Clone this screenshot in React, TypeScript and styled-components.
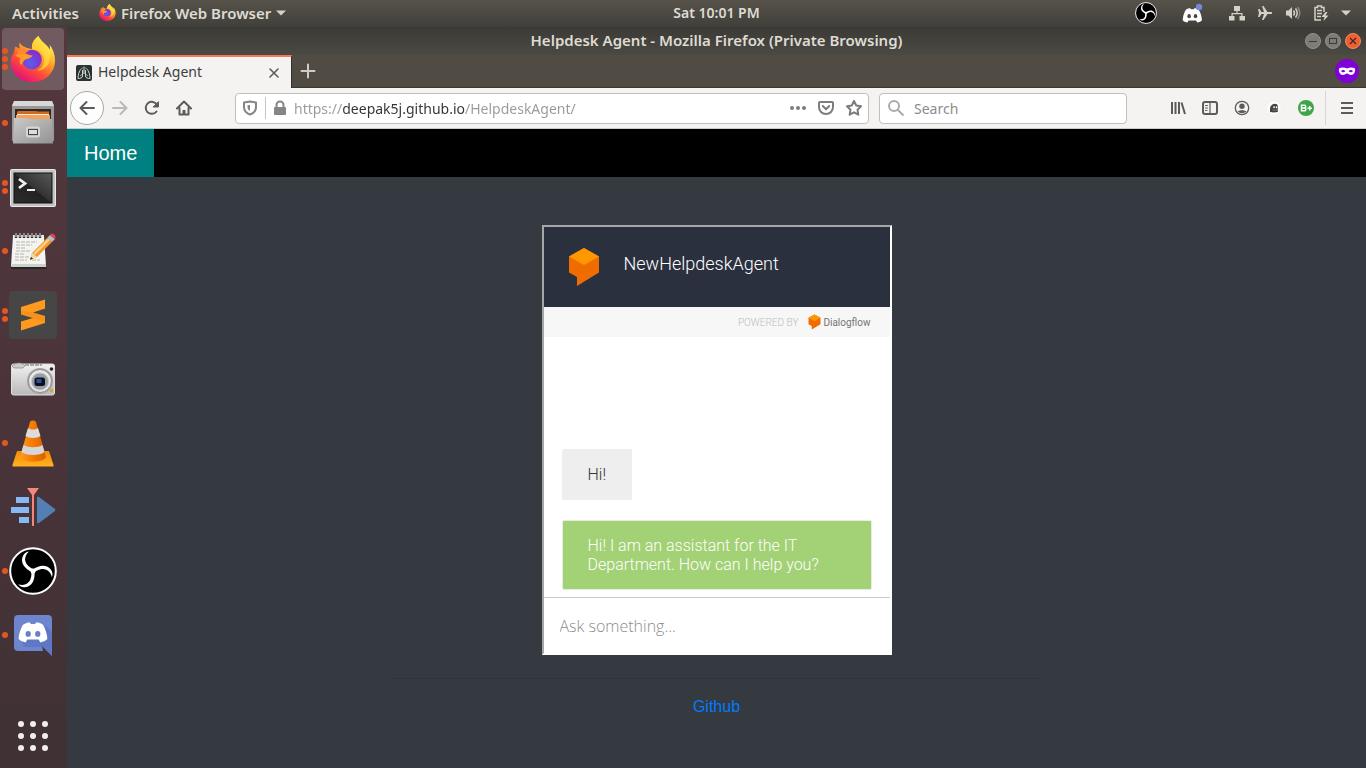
import React, { useId } from "react";
import styled, { createGlobalStyle } from "styled-components";

const uiFont = '"Noto Sans", "Open Sans", sans-serif';
const chatFont = 'Roboto, sans-serif';
const pageFont = '"Liberation Sans", Arial, sans-serif';

const GlobalStyle = createGlobalStyle`
  * { box-sizing: border-box; }
  body { margin: 0; background: #343a40; font-family: ${uiFont}; }
  button { font: inherit; border: 0; padding: 0; background: none; color: inherit; cursor: pointer; }
  svg { display: block; flex: none; }
`;

/* ---------- desktop shell ---------- */

const Desktop = styled.div`
  min-height: 100vh;
  display: flex;
  flex-direction: column;
`;

const TopBar = styled.header`
  height: 27px;
  display: grid;
  grid-template-columns: 67px 1fr auto 1fr;
  align-items: center;
  padding-bottom: 2px;
  background: linear-gradient(#57534b, #403f3a);
  color: #dfdbd2;
  font-size: 15px;
  font-weight: 600;
  line-height: 20px;
`;

const TopLeft = styled.div`
  grid-column: 1 / 3;
  display: flex;
  align-items: center;
  gap: 20px;
  padding-left: 12px;
`;

const AppMenu = styled.button`
  display: flex;
  align-items: center;
  gap: 5px;
`;

const Clock = styled.span`
  font-size: 14px;
`;

const Tray = styled.div`
  display: flex;
  align-items: center;
  justify-content: flex-end;
  gap: 24px;
  padding-right: 15px;
`;

const TrayGroup = styled.div`
  display: flex;
  align-items: center;
  gap: 12px;
`;

const Workspace = styled.div`
  flex: 1;
  display: flex;
`;

const Dock = styled.nav`
  width: 67px;
  flex: none;
  display: flex;
  flex-direction: column;
  gap: 2px;
  padding: 1px 3px 1px 2px;
  background: linear-gradient(#53383d, #4a343a 50%, #3f3134);
`;

const DockItem = styled.button<{ $active?: boolean }>`
  height: 62px;
  display: grid;
  grid-template-columns: 6px 1fr 6px;
  align-items: center;
  justify-items: center;
  border-radius: 4px;
  background: ${(p) => (p.$active ? "#725b60" : "transparent")};
`;

const Dots = styled.span`
  display: flex;
  flex-direction: column;
  gap: 2px;
`;

const Dot = styled.i`
  width: 6px;
  height: 6px;
  border-radius: 50%;
  background: #e95420;
`;

const DockSpacer = styled.div`
  flex: 1;
`;

/* ---------- browser window ---------- */

const Window = styled.main`
  flex: 1;
  min-width: 0;
  display: flex;
  flex-direction: column;
`;

const TitleBar = styled.div`
  height: 28px;
  display: grid;
  grid-template-columns: 1fr auto 1fr;
  align-items: center;
  padding: 0 5px;
  background: linear-gradient(#3b3a36, #4b4943);
  color: #dfdbd2;
  font-size: 15px;
  font-weight: 600;
  line-height: 20px;
`;

const WindowTitle = styled.span`
  grid-column: 2;
  padding-bottom: 2px;
`;

const WindowButtons = styled.div`
  display: flex;
  justify-content: flex-end;
  gap: 4px;
`;

const TabStrip = styled.div`
  height: 33px;
  display: flex;
  align-items: stretch;
  background: #504c44;
  border-bottom: 1px solid #3a3833;
`;

const Tab = styled.div`
  width: 225px;
  margin-bottom: -1px;
  display: flex;
  align-items: center;
  padding: 0 9px;
  border-top: 2px solid #f57c4f;
  border-right: 1px solid #33312d;
  background: #f4f3f1;
  color: #3d3d3d;
  font-size: 14px;
`;

const TabTitle = styled.span`
  flex: 1;
  padding: 0 0 2px 6px;
`;

const NewTab = styled.button`
  width: 32px;
  display: flex;
  align-items: center;
  justify-content: center;
`;

const PrivateBadge = styled.div`
  margin-left: auto;
  padding-right: 7px;
  display: flex;
  align-items: center;
`;

const ToolBar = styled.div`
  height: 41px;
  display: flex;
  align-items: center;
  padding: 0 3px;
  background: #f4f3f1;
  border-bottom: 1px solid #cfcbc6;
`;

const ToolButton = styled.button<{ $round?: boolean }>`
  width: ${(p) => (p.$round ? 34 : 32)}px;
  height: 34px;
  display: flex;
  align-items: center;
  justify-content: center;
  border: ${(p) => (p.$round ? "1px solid #aaa8a5" : "0")};
  border-radius: ${(p) => (p.$round ? 17 : 3)}px;
  background: ${(p) => (p.$round ? "#fdfdfd" : "transparent")};
`;

const Field = styled.div<{ $grow?: boolean }>`
  height: 31px;
  min-width: 0;
  ${(p) => (p.$grow ? "flex: 1; margin-left: 35px;" : "width: 248px; margin: 0 35px 0 10px;")}
  display: flex;
  align-items: center;
  gap: ${(p) => (p.$grow ? 7 : 8)}px;
  padding: 0 6px;
  border: 1px solid #c2bfbb;
  border-radius: 4px;
  background: #fff;
`;

const FieldDivider = styled.span`
  width: 1px;
  height: 22px;
  background: #c4c4c4;
`;

const TextInput = styled.input`
  flex: 1;
  min-width: 0;
  padding: 0;
  border: 0;
  outline: 0;
  background: transparent;
  font: 14px ${uiFont};
  color: #333;
  &::placeholder { color: #8c8c8c; opacity: 1; }
`;

/* The host name is darker than the scheme and the path. */
const UrlInput = styled(TextInput)`
  background: linear-gradient(90deg, #999 49px, #333 49px, #333 171px, #999 171px);
  -webkit-background-clip: text;
  background-clip: text;
  -webkit-text-fill-color: transparent;
`;

const FieldActions = styled.div`
  display: flex;
  gap: 12px;
`;

const ToolDivider = styled.span`
  width: 1px;
  height: 34px;
  margin: 0 5px 0 3px;
  background: #d9d6d2;
`;

/* ---------- web page ---------- */

const Page = styled.div`
  flex: 1;
  background: #343a40;
  font-family: ${pageFont};
`;

const SiteNav = styled.nav`
  display: flex;
  background: #000;
`;

const HomeLink = styled.a`
  padding: 12px 17px;
  background: #008080;
  color: #fff;
  font-size: 20px;
  line-height: 24px;
  text-decoration: none;
`;

const Content = styled.section`
  width: 50%;
  margin: 0 auto;
  padding-top: 48px;
  display: flex;
  flex-direction: column;
  align-items: center;
`;

const ChatFrame = styled.div`
  width: 350px;
  border: 2px solid;
  border-color: #a6a6a6 #fff #fff #a6a6a6;
  background: #fff;
  font-family: ${chatFont};
  font-weight: 300;
`;

const ChatHeader = styled.div`
  height: 80px;
  display: flex;
  align-items: center;
  gap: 24px;
  padding: 0 24px;
  background: #2b303f;
  color: #fff;
`;

const ChatTitle = styled.h1`
  margin: 0 0 6px;
  font-size: 18px;
  line-height: 24px;
  font-weight: 300;
`;

const PoweredBy = styled.div`
  height: 30px;
  display: flex;
  align-items: center;
  justify-content: flex-end;
  gap: 10px;
  padding-right: 19px;
  background: #f7f7f7;
  color: #b7bbc4;
  font-size: 10px;
`;

const Brand = styled.span`
  display: flex;
  align-items: center;
  gap: 2px;
  color: #757575;
  font-size: 10px;
  font-weight: 400;
`;

const Messages = styled.div`
  height: 260px;
  display: flex;
  flex-direction: column;
  justify-content: flex-end;
  align-items: flex-start;
  gap: 20px;
  padding: 0 18px 7px;
`;

const Bubble = styled.p<{ $reply?: boolean }>`
  margin: 0;
  padding: ${(p) => (p.$reply ? "15px 25px" : "16px 26px")};
  border: ${(p) => (p.$reply ? "1px solid #e6eedd" : "0")};
  border-radius: 2px;
  background: ${(p) => (p.$reply ? "#a3d175" : "#eee")};
  color: ${(p) => (p.$reply ? "#fff" : "#333")};
  font-size: 16px;
  line-height: 19px;
`;

const Ask = styled.input`
  display: block;
  width: 100%;
  height: 56px;
  padding: 0 16px;
  border: 0;
  border-top: 1px solid #ccc;
  outline: 0;
  background: #fff;
  font: 300 16px "Open Sans", sans-serif;
  &::placeholder { color: #8c8c8c; opacity: 1; }
`;

const Rule = styled.hr`
  width: 100%;
  margin: 23px 0 16px;
  border: 0;
  border-top: 1px solid #2f343a;
`;

const GithubLink = styled.a`
  color: #007bff;
  font-size: 16px;
  line-height: 24px;
  text-decoration: none;
`;

/* ---------- dock drawings ---------- */

function FirefoxIcon({ size }: { size: number }) {
  const id = useId();
  return (
    <svg width={size} height={size} viewBox="0 0 46 46">
      <defs>
        <linearGradient id={id + "b"} x1=".8" y1=".1" x2=".25" y2=".95">
          <stop offset="0" stopColor="#fff44f" />
          <stop offset=".35" stopColor="#ffa72a" />
          <stop offset=".65" stopColor="#ff5034" />
          <stop offset="1" stopColor="#e6107c" />
        </linearGradient>
        <linearGradient id={id + "f"} x1="1" y1="0" x2=".4" y2="1">
          <stop offset="0" stopColor="#fff44f" />
          <stop offset="1" stopColor="#ffb52a" />
        </linearGradient>
        <radialGradient id={id + "g"} cx=".4" cy=".7" r=".7">
          <stop offset="0" stopColor="#5b5cf0" />
          <stop offset="1" stopColor="#8a2bc4" />
        </radialGradient>
      </defs>
      <path d="M9.500 6.500C9 9 9.200 10.500 10 12.500L5 10.500C4.500 13 4.500 14.500 4 16.500C1.500 20 .5 23.500 .8 27C1.500 38 11 46 23 46C35.500 46 45 36.500 45 24.500C45 18.500 43 13 39.500 8.500C40 10.500 40.200 12 40 14C37 8 31 6.500 28.500 0C23.500 3.500 21.500 8.500 22 13C17 12.500 12 10.500 9.500 6.500Z" fill={`url(#${id}b)`} />
      <path d="M28.500 0C23 4 21 9 22.500 13.500C30 13 35 18 34 25C33.500 30 31 33 27 34.500C36 34.500 42 27 40 14C37 8 31 6.500 28.500 0Z" fill={`url(#${id}f)`} />
      <circle cx="22" cy="23.500" r="9.800" fill={`url(#${id}g)`} />
      <path d="M5 20C8 17 12 17 16 17.500C18 18.500 20 19.500 22.500 19.500C22 22 17 23 14.500 24C13.500 26 12 27 11.500 29C9 27 9.500 24.500 10.500 22.500C8.500 20.800 7 20.500 5 20Z" fill="#ff9a24" />
      <path d="M10 12.500C14 11.500 17 13 18 15.500C16 16 15 17 14 18.500C12 18 9 18 7 19C7.500 16 8.500 14 10 12.500Z" fill="#ff8a2c" />
    </svg>
  );
}

const FilesIcon = () => (
  <svg width="44" height="46" viewBox="0 0 44 46">
    <defs>
      <linearGradient id="cab" x1="0" y1="0" x2="1" y2="1">
        <stop offset="0" stopColor="#cacaca" />
        <stop offset="1" stopColor="#929292" />
      </linearGradient>
    </defs>
    <path d="M3 1H41L43 6V41H1V6Z" fill="#989898" />
    <path d="M3 1H41L43 6H1Z" fill="#d8d8d8" />
    <rect x="4" y="9" width="36" height="10" fill="#2c2a28" />
    <path d="M6 12L7 11H25L27 11.500H38V18H6Z" fill="#cf6a24" />
    <path d="M5 15H39V19H5Z" fill="#f0a35a" />
    <path d="M6 14.500H38" stroke="#ffe9cc" />
    <path d="M3 18H15L17 19H41L42 43.500H2Z" fill="url(#cab)" />
    <rect x="16" y="27.500" width="12" height="9" rx="1.500" fill="#a8a8a8" stroke="#d6d6d6" strokeWidth="2" />
    <rect x="17.500" y="29.500" width="9" height="5" fill="#ddd" stroke="#444" />
  </svg>
);

const TerminalIcon = () => (
  <svg width="46" height="40" viewBox="0 -2 46 40">
    <defs>
      <linearGradient id="scr" x1="1" y1="0" x2="0" y2="1">
        <stop offset="0" stopColor="#5a5a5a" />
        <stop offset=".5" stopColor="#323232" />
        <stop offset=".51" stopColor="#222" />
        <stop offset="1" stopColor="#2c2c2c" />
      </linearGradient>
    </defs>
    <rect x=".5" y=".5" width="45" height="37" rx="1" fill="#c4c4c4" stroke="#e8e8e8" />
    <rect x="4" y="4" width="38" height="30" fill="url(#scr)" stroke="#111" />
    <path d="M9 10L15 14.500L9 19" fill="none" stroke="#eee" strokeWidth="2.800" />
    <path d="M17 21H25" stroke="#eee" strokeWidth="2" />
  </svg>
);

const NotesIcon = () => (
  <svg width="46" height="38" viewBox="0 0 46 38">
    <path d="M3 3H35V34L37 37H1Z" fill="#22282a" />
    <path d="M3 3H34L36 34H1Z" fill="#f3f3ef" />
    <path d="M2 32H36V35H1Z" fill="#cfcfca" />
    <path d="M6 1V6M10 1V6M14 1V6M18 1V6M22 1V6M26 1V6M30 1V6" stroke="#333" strokeWidth="2.400" />
    <path d="M6 1V5M10 1V5M14 1V5M18 1V5M22 1V5M26 1V5M30 1V5" stroke="#ddd" />
    <path d="M6 10H27M6 13H22M6 16H16M6 19H20M5 22H14M5 25H19M5 28H17M22 28H30" stroke="#b4b4b0" strokeDasharray="4 1" />
    <path d="M20 28L22 21L37 6L42 10L27 25Z" fill="#f29a2e" />
    <path d="M23.500 21L38 6.500L40 8L25 23Z" fill="#ffd08a" />
    <path d="M20 28L22 21L27 25Z" fill="#f4d9a8" />
    <path d="M20 28L21 25L23 26.500Z" fill="#222" />
    <path d="M37 6L40 3L45 7L42 10Z" fill="#b8bcc0" />
    <path d="M40 3C42 0 47 3 45 7Z" fill="#e8424e" />
  </svg>
);

const SublimeIcon = () => (
  <svg width="48" height="48" viewBox="0 0 48 48">
    <rect width="48" height="48" rx="4" fill="#464646" />
    <path d="M12 16L36 8.500V17.500L24 21.500L36 25V32L12 39.500V30.500L24 27L12 23.500Z" fill="#ff9a1f" />
    <path d="M24 21.500L36 25V31L12 23.500V20Z" fill="#e8861a" opacity=".4" />
  </svg>
);

const CameraIcon = () => (
  <svg width="44" height="34" viewBox="0 0 44 34">
    <defs>
      <linearGradient id="cam" x1="0" y1="0" x2="0" y2="1">
        <stop offset="0" stopColor="#f2f2f2" />
        <stop offset="1" stopColor="#b9b9b9" />
      </linearGradient>
    </defs>
    <rect x=".5" y="2" width="43" height="31" rx="2" fill="url(#cam)" stroke="#dedede" />
    <path d="M1 4C5 0 11 0 14 4L12 6H3Z" fill="#ccc" stroke="#888" strokeWidth=".7" />
    <path d="M14 3H31" stroke="#666" strokeDasharray="4 1" />
    <circle cx="29" cy="19" r="13" fill="#a4a4a4" />
    <circle cx="29" cy="19" r="11.500" fill="#e8e8e8" stroke="#8c8c8c" />
    <circle cx="29" cy="19.500" r="8.500" fill="#9a9da2" stroke="#c6c6c6" />
    <rect x="23.500" y="15.500" width="10.500" height="8.500" rx="2.500" fill="#0b1020" />
    <rect x="25.500" y="17" width="5" height="4" fill="#2c4f96" />
    <circle cx="40.500" cy="7" r="1.800" fill="#222" />
    <rect x="39" y="27" width="3" height="3" fill="#e8a020" />
  </svg>
);

const ConeIcon = () => (
  <svg width="42" height="48" viewBox="0 0 42 48">
    <defs>
      <linearGradient id="base" x1="0" y1="0" x2="0" y2="1">
        <stop offset="0" stopColor="#f48a0c" />
        <stop offset="1" stopColor="#ffb41e" />
      </linearGradient>
      <linearGradient id="cone">
        <stop offset="0" stopColor="#ff9a28" />
        <stop offset=".5" stopColor="#f47a00" />
        <stop offset="1" stopColor="#d96000" />
      </linearGradient>
    </defs>
    <path d="M5 32H37L41.500 46V47.500H.5V46Z" fill="url(#base)" />
    <path d="M8 38L18 3C18.500 1 23.500 1 24 3L34 38C32 44 10 44 8 38Z" fill="url(#cone)" />
    <path d="M16 9C19 11 23 11 26 9L28.500 17C25 19.500 17 19.500 13.500 17Z" fill="#dcdcdc" />
    <path d="M11.500 26C16 29 26 29 30.500 26L32.500 33C28 37 14 37 9.500 33Z" fill="#d6d6d6" />
  </svg>
);

const EditorIcon = () => (
  <svg width="46" height="38" viewBox="0 0 46 38">
    <path d="M6 9H19V15H6ZM1 19H19V25H1ZM9 29H19V35H9Z" fill="#86b9f4" />
    <path d="M17 0H29L24 7V38H22V7Z" fill="#f4877a" />
    <path d="M27 9Q28 8.500 29 9L45 21Q45.500 22 45 23L29 35Q28 35.500 27 35Z" fill="#527fb4" />
  </svg>
);

function ObsIcon({ size }: { size: number }) {
  return (
    <svg width={size} height={size} viewBox="0 0 48 48">
      <circle cx="24" cy="24" r="22.800" fill="#000" stroke="#fff" strokeWidth="2" />
      {[0, 120, 240].map((a) => (
        <path key={a} transform={`rotate(${a} 24 24)`} d="M24 25.500C15 22 11 15 14 9C15 6.500 17 5 20 4.500C15 9 14 16 22 21L25 22.500Z" fill="#fff" />
      ))}
      <circle cx="24" cy="24" r="2.500" fill="#fff" />
    </svg>
  );
}

const faceOutline =
  "M8 3C11 1 14 .5 16 .5L17 2H22L23 .5C26 .5 29 1 31 3C34 8 36 13 36 18C34 20 31 21 28 21.500L26 18.500H13L11 21.500C8 21 5 20 3 18C3 13 5 8 8 3Z";

const DiscordIcon = () => (
  <svg width="38" height="42" viewBox="0 0 38 42">
    <path d="M4 1H34Q38 1 38 5V42L28 32L29 37H4Q0 37 0 33V5Q0 1 4 1Z" fill="#6c85cd" />
    <path d="M32 12L38 18V42L28 33H10L8 27Z" fill="#5269bb" opacity=".5" />
    <g transform="translate(2 8) scale(.87 .95)">
      <path d={faceOutline} fill="#fff" />
      <circle cx="14" cy="12.500" r="3" fill="#667fc8" />
      <circle cx="25" cy="12.500" r="3" fill="#667fc8" />
    </g>
  </svg>
);

const DiscordTray = () => (
  <svg width="24" height="22" viewBox="0 0 24 22">
    <g transform="translate(0 6) scale(.58 .68)">
      <path d={faceOutline} fill="#fff" />
      <circle cx="14" cy="12" r="3" fill="#47453f" />
      <circle cx="25" cy="12" r="3" fill="#47453f" />
    </g>
    <circle cx="18" cy="5" r="3.200" fill="#7289da" />
  </svg>
);

const AppsIcon = () => (
  <svg width="32" height="32" viewBox="0 0 32 32" fill="#f0efee">
    {[4, 16, 28].map((y) => [4, 16, 28].map((x) => <circle key={`${x}-${y}`} cx={x} cy={y} r="3" />))}
  </svg>
);

/* ---------- small glyphs ---------- */

const Caret = () => (
  <svg width="10" height="6" viewBox="0 0 10 6"><path d="M0 .5H10L5 5.500Z" fill="#d5d1c8" /></svg>
);

const Glyph = ({ children, color = "#5c5b59", w = 2 }: { children: React.ReactNode; color?: string; w?: number }) => (
  <svg width="16" height="16" viewBox="0 0 16 16" fill="none" stroke={color} strokeWidth={w} strokeLinecap="round" strokeLinejoin="round">
    {children}
  </svg>
);

const WindowButton = ({ kind }: { kind: "min" | "max" | "close" }) => (
  <button aria-label={kind}>
    <svg width="16" height="16" viewBox="0 0 16 16" fill="none">
      <circle cx="8" cy="8" r="7.500" fill={kind === "close" ? "#ee5f33" : "#7f7c75"} stroke={kind === "close" ? "#f08a60" : "#95928a"} />
      {kind === "min" && <path d="M4 8.500H12" stroke="#3c3b37" />}
      {kind === "max" && <rect x="4.500" y="5.500" width="7" height="5" stroke="#3c3b37" />}
      {kind === "close" && <path d="M5 5L11 11M11 5L5 11" stroke="#3c2a22" strokeWidth="1.300" />}
    </svg>
  </button>
);

const LungsIcon = () => (
  <svg width="16" height="16" viewBox="0 0 16 16" fill="none" stroke="#cfd3d1">
    <rect width="16" height="16" rx="2" fill="#2b3231" stroke="none" />
    <path d="M8 1.500V8M6.500 3C4 4 2 9 2 13.500C4 13.500 6.500 13 6.500 11V5M9.500 3C12 4 14 9 14 13.500C12 13.500 9.500 13 9.500 11V5" />
    <path d="M8 8L4 11M8 8L12 11" strokeWidth=".7" />
  </svg>
);

const MaskIcon = () => (
  <svg width="24" height="24" viewBox="0 0 24 24">
    <circle cx="12" cy="12" r="12" fill="#8000d7" />
    <path d="M4 9.500C6 8 9.500 8 12 9.500C14.500 8 18 8 20 9.500C20.500 13 19 16 16 16C14 16 13.500 14.500 12 14.500C10.500 14.500 10 16 8 16C5 16 3.500 13 4 9.500Z" fill="#fff" />
    <path d="M6 12C7.500 10.300 9.500 10.800 10.300 12.300C9 13.800 7 13.500 6 12ZM18 12C16.500 10.300 14.500 10.800 13.700 12.300C15 13.800 17 13.500 18 12Z" fill="#8000d7" />
  </svg>
);

const DialogflowMark = ({ width, height }: { width: number; height: number }) => (
  <svg width={width} height={height} viewBox="0 0 32 40">
    <path d="M16 1L31 9.500V25.500L9 39V30L1 25.500V9.500Z" fill="#ef6c00" />
    <path d="M16 1L31 9.500L16 18L1 9.500Z" fill="#ff9800" />
  </svg>
);

const dockApps = [
  { name: "Firefox", dots: 3, icon: <FirefoxIcon size={46} />, active: true },
  { name: "Files", dots: 1, icon: <FilesIcon /> },
  { name: "Terminal", dots: 2, icon: <TerminalIcon /> },
  { name: "Text Editor", dots: 1, icon: <NotesIcon /> },
  { name: "Sublime Text", dots: 2, icon: <SublimeIcon /> },
  { name: "Camera", dots: 0, icon: <CameraIcon /> },
  { name: "VLC", dots: 1, icon: <ConeIcon /> },
  { name: "Video Editor", dots: 0, icon: <EditorIcon /> },
  { name: "OBS", dots: 1, icon: <ObsIcon size={48} /> },
  { name: "Discord", dots: 1, icon: <DiscordIcon /> },
];

export default function App() {
  return (
    <Desktop>
      <GlobalStyle />
      <TopBar>
        <TopLeft>
          <button>Activities</button>
          <AppMenu>
            <FirefoxIcon size={17} />
            Firefox Web Browser
            <Caret />
          </AppMenu>
        </TopLeft>
        <Clock>Sat 10:01 PM</Clock>
        <Tray>
          <ObsIcon size={22} />
          <DiscordTray />
          <TrayGroup>
            <svg width="16" height="16" viewBox="0 0 16 16" fill="#d5d1c8">
              <path d="M5 1H11V6H8.600V8H13.500V11H16V15.500H10.500V11H12.300V9.200H3.700V11H5.500V15.500H0V11H2.500V8H7.400V6H5Z" />
            </svg>
            <svg width="16" height="16" viewBox="0 0 16 16" fill="#d5d1c8">
              <path d="M1 4H2.500L4.500 7H7L5 1H6.500L10.500 7H14C15.500 7 15.500 9 14 9H10.500L6.500 15H5L7 9H4.500L2.500 12H1L2 8Z" />
            </svg>
            <svg width="16" height="16" viewBox="0 0 16 16" fill="none" stroke="#d5d1c8" strokeWidth="1.500">
              <path d="M1 5.500H3.500L7 2V14L3.500 10.500H1Z" fill="#d5d1c8" stroke="none" />
              <path d="M8.500 5.500Q10.500 8 8.500 10.500M10.500 3.500Q14 8 10.500 12.500" />
              <path d="M12.500 2Q17 8 12.500 14" stroke="#8a877f" />
            </svg>
            <svg width="16" height="16" viewBox="0 0 16 16" fill="none" stroke="#d5d1c8" strokeWidth="1.500">
              <path d="M8 15H2V2.500H4.500V1H8.500V2.500H11V7M4 5.500H9M4 8.500H9M4 11.500H8" />
              <path d="M12.500 7L8.500 12H11.500L10.500 16L15.500 10.500H12.500L14.500 7Z" fill="#d5d1c8" stroke="none" />
            </svg>
            <Caret />
          </TrayGroup>
        </Tray>
      </TopBar>

      <Workspace>
        <Dock>
          {dockApps.map((app) => (
            <DockItem key={app.name} aria-label={app.name} $active={app.active}>
              <Dots>
                {Array.from({ length: app.dots }, (_, i) => <Dot key={i} />)}
              </Dots>
              {app.icon}
            </DockItem>
          ))}
          <DockSpacer />
          <DockItem aria-label="Show applications">
            <span />
            <AppsIcon />
          </DockItem>
        </Dock>

        <Window>
          <TitleBar>
            <WindowTitle>Helpdesk Agent - Mozilla Firefox (Private Browsing)</WindowTitle>
            <WindowButtons>
              <WindowButton kind="min" />
              <WindowButton kind="max" />
              <WindowButton kind="close" />
            </WindowButtons>
          </TitleBar>

          <TabStrip>
            <Tab>
              <LungsIcon />
              <TabTitle>Helpdesk Agent</TabTitle>
              <button aria-label="Close tab">
                <Glyph w={1.6}><path d="M4 4L12 12M12 4L4 12" /></Glyph>
              </button>
            </Tab>
            <NewTab aria-label="New tab">
              <Glyph color="#d0ccc4"><path d="M8 1.500V14.500M1.500 8H14.500" /></Glyph>
            </NewTab>
            <PrivateBadge><MaskIcon /></PrivateBadge>
          </TabStrip>

          <ToolBar>
            <ToolButton $round aria-label="Back">
              <Glyph><path d="M15 8H1.500M7.500 2L1.500 8L7.500 14" /></Glyph>
            </ToolButton>
            <ToolButton aria-label="Forward">
              <Glyph color="#bbb9b6"><path d="M1 8H14.500M8.500 2L14.500 8L8.500 14" /></Glyph>
            </ToolButton>
            <ToolButton aria-label="Reload">
              <Glyph><path d="M12.500 11.500A6 6 0 1 1 13 5" /><path d="M14.500 2V7H9.500Z" fill="#5c5b59" strokeWidth="1" /></Glyph>
            </ToolButton>
            <ToolButton aria-label="Home">
              <Glyph><path d="M1 8.500L8 1.500L15 8.500M3.500 8V14.500H12.500V8" /><path d="M8 14V10" strokeWidth="3" strokeLinecap="butt" /></Glyph>
            </ToolButton>

            <Field $grow>
              <Glyph color="#858585"><path d="M8 1.500L14 2.500V7C14 11 11 13.500 8 14.500C5 13.500 2 11 2 7V2.500Z" /><path d="M8 5V11C6.500 10 5.500 9 5.500 7V5.300Z" fill="#858585" stroke="none" /></Glyph>
              <FieldDivider />
              <svg width="14" height="16" viewBox="0 0 14 16">
                <path d="M3.500 8V5A3.500 3.500 0 0 1 10.500 5V8" fill="none" stroke="#858585" strokeWidth="2" />
                <rect x="1" y="7" width="12" height="8" rx="1" fill="#858585" />
              </svg>
              <UrlInput aria-label="Address" defaultValue="https://deepak5j.github.io/HelpdeskAgent/" />
              <FieldActions>
                <button aria-label="Page actions">
                  <Glyph color="#7c7c7c"><path d="M2 8h.01M8 8h.01M14 8h.01" strokeWidth="4" /></Glyph>
                </button>
                <button aria-label="Save to Pocket">
                  <Glyph color="#7c7c7c"><path d="M2 2H14Q15 2 15 3V7C15 11 12 14 8 14C4 14 1 11 1 7V3Q1 2 2 2Z" /><path d="M4.800 6L8 9.200L11.200 6" /></Glyph>
                </button>
                <button aria-label="Bookmark">
                  <Glyph color="#7c7c7c"><path d="M8 1L10.200 5.500L15 6.200L11.500 9.700L12.300 14.700L8 12.300L3.700 14.700L4.500 9.700L1 6.200L5.800 5.500Z" /></Glyph>
                </button>
              </FieldActions>
            </Field>

            <Field>
              <svg width="20" height="18" viewBox="0 0 20 18" fill="none" stroke="#aaa" strokeWidth="2">
                <circle cx="8" cy="7" r="5" /><path d="M11.500 10.500L17.500 16.500" />
              </svg>
              <TextInput aria-label="Search" placeholder="Search" />
            </Field>

            <ToolButton aria-label="Library">
              <Glyph><path d="M2 2V14M5.500 2V14M9 2V14M11.500 2.500L15 14" strokeLinecap="butt" /></Glyph>
            </ToolButton>
            <ToolButton aria-label="Sidebars">
              <Glyph><rect x="1" y="2" width="14" height="12" rx="2" /><path d="M8 2V14M3.500 5.500H5.500M3.500 8H5.500M3.500 10.500H5" strokeWidth="1.200" /></Glyph>
            </ToolButton>
            <ToolButton aria-label="Account">
              <Glyph w={1.3}><circle cx="8" cy="8" r="6.700" /><circle cx="8" cy="6.300" r="2.700" fill="#5c5b59" stroke="none" /><path d="M3.500 11.500Q8 8.500 12.500 11.500Q8 15 3.500 11.500Z" fill="#5c5b59" stroke="none" /></Glyph>
            </ToolButton>
            <ToolButton aria-label="Privacy extension">
              <svg width="16" height="16" viewBox="0 0 16 16">
                <circle cx="8" cy="8" r="6.500" fill="#fff" />
                <path d="M4 12V8.500C4.500 3 11.500 2.500 11.800 6V12L8 12.500Z" fill="#444" />
                <path d="M7.500 6.500H8.700V8H7.500ZM10 6.500H11V8H10ZM6.500 10H11" fill="#fff" stroke="#fff" strokeWidth=".3" />
              </svg>
            </ToolButton>
            <ToolButton aria-label="B plus extension">
              <svg width="16" height="16" viewBox="0 0 16 16" fill="none" stroke="#fff" strokeWidth="1.500">
                <circle cx="8" cy="8" r="8" fill="#3fa648" stroke="none" />
                <path d="M3.500 5.300H6.500Q8 5.500 7.500 7.500L6.500 8H3.500ZM3.500 8H6.500Q8.500 8.500 7.500 10.500L6.500 10.800H3.500ZM9.500 8.200H14M11.700 6V10.500" />
              </svg>
            </ToolButton>
            <ToolDivider />
            <ToolButton aria-label="Menu">
              <Glyph><path d="M2 3H14M2 8H14M2 13H14" strokeLinecap="butt" /></Glyph>
            </ToolButton>
          </ToolBar>

          <Page>
            <SiteNav><HomeLink href="#home">Home</HomeLink></SiteNav>
            <Content>
              <ChatFrame>
                <ChatHeader>
                  <DialogflowMark width={32} height={40} />
                  <ChatTitle>NewHelpdeskAgent</ChatTitle>
                </ChatHeader>
                <PoweredBy>
                  POWERED BY
                  <Brand><DialogflowMark width={13} height={16} />Dialogflow</Brand>
                </PoweredBy>
                <Messages>
                  <Bubble>Hi!</Bubble>
                  <Bubble $reply>Hi! I am an assistant for the IT Department. How can I help you?</Bubble>
                </Messages>
                <Ask aria-label="Ask something" placeholder="Ask something..." />
              </ChatFrame>
              <Rule />
              <GithubLink href="#github">Github</GithubLink>
            </Content>
          </Page>
        </Window>
      </Workspace>
    </Desktop>
  );
}
